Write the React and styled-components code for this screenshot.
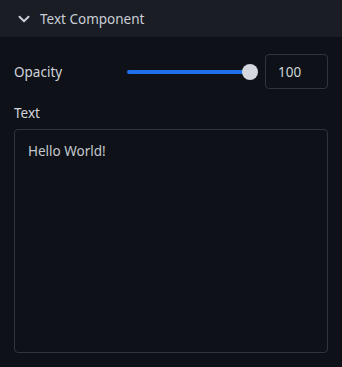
import React, { useState } from "react";
import styled, { createGlobalStyle } from "styled-components";

const GlobalStyle = createGlobalStyle`
  html, body {
    margin: 0;
    padding: 0;
    background: #0e1117;
  }
  body {
    font-family: "Noto Sans", "Open Sans", sans-serif;
  }
`;

const Panel = styled.div`
  width: 342px;
  height: 367px;
  background: #0e1117;
  color: #d0d4da;
  display: flex;
  flex-direction: column;
`;

const Header = styled.div`
  height: 37px;
  background: #1a1d24;
  display: flex;
  align-items: center;
  padding: 1px 0 0 18px;
  gap: 10px;
  font-size: 13.5px;
  color: #c9ced6;
  box-sizing: border-box;
`;

const Body = styled.div`
  padding: 17px 14px 0 14px;
  display: flex;
  flex-direction: column;
`;

const Row = styled.div`
  display: flex;
  align-items: center;
  height: 35px;
`;

const Label = styled.div`
  font-size: 13.5px;
  color: #d0d4da;
  width: ${(p) => p.$width || "auto"};
`;

const SliderWrap = styled.div`
  position: relative;
  width: 130px;
  height: 18px;
  margin-right: 8px;
  display: flex;
  align-items: center;
`;

const Track = styled.div`
  height: 4px;
  width: 100%;
  border-radius: 2px;
  background: #1f6feb;
`;

const Thumb = styled.div`
  position: absolute;
  right: -1px;
  top: 1px;
  width: 16px;
  height: 16px;
  border-radius: 50%;
  background: #d4d8de;
`;

const NumberBox = styled.div`
  width: 63px;
  height: 35px;
  box-sizing: border-box;
  border: 1px solid #30343c;
  border-radius: 4px;
  display: flex;
  align-items: center;
  padding-left: 12px;
  font-size: 13.5px;
  color: #d0d4da;
`;

const TextLabel = styled(Label)`
  margin-top: 15px;
  margin-bottom: 7px;
`;

const TextArea = styled.textarea`
  width: 314px;
  height: 224px;
  box-sizing: border-box;
  background: transparent;
  border: 1px solid #30343c;
  border-radius: 4px;
  padding: 12px 13px;
  font-family: "Noto Sans", "Open Sans", sans-serif;
  font-size: 13.5px;
  color: #c3c8cf;
  resize: none;
  outline: none;
`;

function Chevron() {
  return (
    <svg width="12" height="12" viewBox="0 0 12 12" fill="none">
      <path
        d="M1.5 3.8 L6 8.2 L10.5 3.8"
        stroke="#c9ced6"
        strokeWidth="2"
        strokeLinecap="round"
        strokeLinejoin="round"
      />
    </svg>
  );
}

export default function App() {
  const [text, setText] = useState("Hello World!");
  return (
    <>
      <GlobalStyle />
      <Panel>
        <Header>
          <Chevron />
          Text Component
        </Header>
        <Body>
          <Row>
            <Label $width="113px">Opacity</Label>
            <SliderWrap>
              <Track />
              <Thumb />
            </SliderWrap>
            <NumberBox>100</NumberBox>
          </Row>
          <TextLabel>Text</TextLabel>
          <TextArea value={text} onChange={(e) => setText(e.target.value)} />
        </Body>
      </Panel>
    </>
  );
}
